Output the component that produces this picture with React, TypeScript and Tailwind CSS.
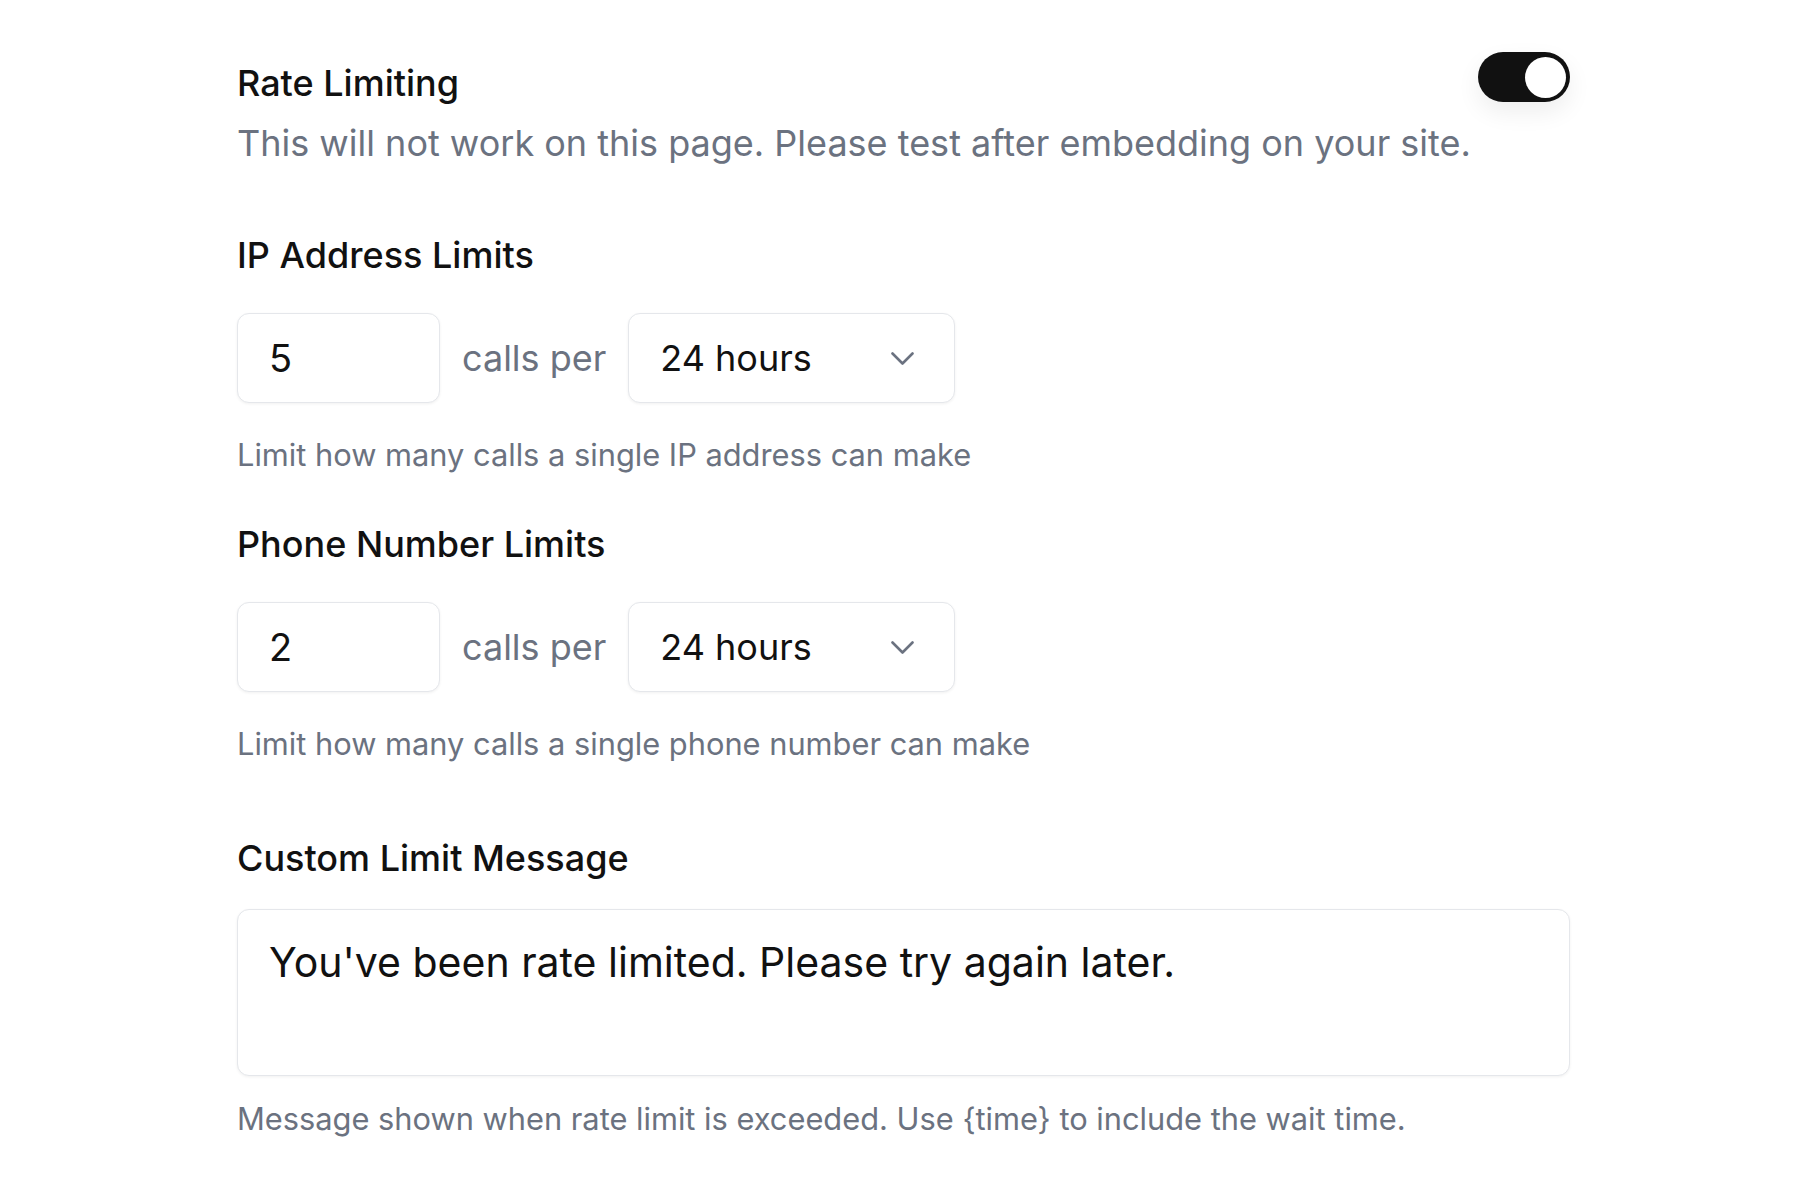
import { useState } from "react";

// Rate limiting settings panel: toggle, per-IP / per-phone limits and a custom message.

interface LimitRowProps {
  label: string;
  count: string;
  period: string;
  hint: string;
}

function Chevron() {
  return (
    <svg width="23" height="13" viewBox="0 0 23 13" fill="none" className="shrink-0">
      <polyline
        points="1.5,1.5 11.5,11.5 21.5,1.5"
        stroke="#6b7280"
        strokeWidth="2.6"
        strokeLinecap="round"
        strokeLinejoin="round"
      />
    </svg>
  );
}

function LimitRow({ label, count, period, hint }: LimitRowProps) {
  return (
    <div>
      <h3 className="text-[36px] font-medium leading-[44px] text-[#111111]">{label}</h3>

      <div className="mt-[36px] flex h-[90px] items-center">
        <input
          readOnly
          value={count}
          className="h-full w-[203px] rounded-[12px] border border-[#e5e7eb] bg-white px-[31px] text-[38px] text-[#111111] shadow-[0_1px_3px_rgba(0,0,0,0.06)] outline-none"
        />
        <span className="ml-[22px] mr-[22px] text-[36px] text-[#6b7280]">calls per</span>
        <button
          type="button"
          className="flex h-full w-[327px] items-center justify-between rounded-[12px] border border-[#e5e7eb] bg-white pl-[31px] pr-[40px] text-[36px] text-[#111111] shadow-[0_1px_3px_rgba(0,0,0,0.06)]"
        >
          <span>{period}</span>
          <Chevron />
        </button>
      </div>

      <p className="mt-[34px] text-[30.8px] leading-[36px] text-[#6b7280]">{hint}</p>
    </div>
  );
}

export default function App() {
  const [enabled, setEnabled] = useState(true);

  return (
    <div className="min-h-screen bg-white font-['Inter',sans-serif] antialiased">
      <div className="ml-[237px] w-[1333px] pt-[52px]">
        {/* Header + toggle */}
        <div className="flex items-start justify-between">
          <h2 className="pt-[9px] text-[36px] font-medium leading-[44px] text-[#111111]">Rate Limiting</h2>

          <button
            type="button"
            onClick={() => setEnabled(!enabled)}
            className={`flex h-[50px] w-[92px] shrink-0 items-center rounded-full px-[4px] shadow-[0_10px_24px_rgba(0,0,0,0.07)] ${
              enabled ? "justify-end bg-[#111111]" : "justify-start bg-[#e5e7eb]"
            }`}
          >
            <span className="h-[41px] w-[41px] rounded-full bg-white" />
          </button>
        </div>
        <p className="mt-[16px] whitespace-nowrap text-[36px] leading-[44px] text-[#6b7280]">
          This will not work on this page. Please test after embedding on your site.
        </p>

        <div className="mt-[68px]">
          <LimitRow
            label="IP Address Limits"
            count="5"
            period="24 hours"
            hint="Limit how many calls a single IP address can make"
          />
        </div>

        <div className="mt-[49px]">
          <LimitRow
            label="Phone Number Limits"
            count="2"
            period="24 hours"
            hint="Limit how many calls a single phone number can make"
          />
        </div>

        {/* Custom message */}
        <div className="mt-[74px]">
          <h3 className="text-[36px] font-medium leading-[44px] text-[#111111]">Custom Limit Message</h3>
          <textarea
            readOnly
            defaultValue="You've been rate limited. Please try again later."
            className="mt-[29px] block h-[167px] w-full resize-none rounded-[12px] border border-[#e5e7eb] bg-white px-[31px] pt-[27px] text-[41px] leading-[50px] text-[#111111] shadow-[0_1px_3px_rgba(0,0,0,0.06)] outline-none"
          />
          <p className="mt-[25px] text-[30.8px] leading-[36px] text-[#6b7280]">
            Message shown when rate limit is exceeded. Use {"{time}"} to include the wait time.
          </p>
        </div>
      </div>
    </div>
  );
}
